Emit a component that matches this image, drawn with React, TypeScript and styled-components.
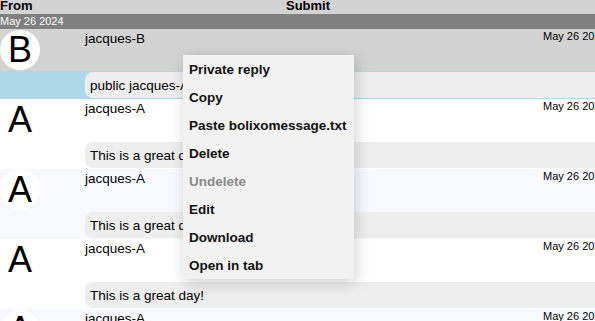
import React from "react";
import styled, { createGlobalStyle } from "styled-components";

const Global = createGlobalStyle`
  html, body { margin: 0; padding: 0; overflow: hidden; background: #fff; }
  body { font-family: "Liberation Sans", Arial, sans-serif; font-size: 13px; color: #000; }
`;

const Page = styled.div`
  position: relative;
  width: 595px;
  height: 321px;
  overflow: hidden;
`;

const Header = styled.div`
  display: grid;
  grid-template-columns: 85px 1fr 64px;
  height: 14px;
  line-height: 12px;
  background: #d3d3d3;
  font-weight: bold;
  font-size: 13px;
`;

const HeaderCell = styled.div<{ $center?: boolean }>`
  text-align: ${(p) => (p.$center ? "center" : "left")};
  white-space: nowrap;
`;

const DateBar = styled.div`
  height: 15px;
  line-height: 14px;
  background: #808080;
  color: #fff;
  font-size: 11px;
`;

const MessageRow = styled.div<{ $bg: string }>`
  display: grid;
  grid-template-columns: 85px 1fr 52px;
  height: 42px;
  background: ${(p) => p.$bg};
`;

const AvatarCell = styled.div`
  padding-top: 1px;
`;

const Avatar = styled.div`
  width: 40px;
  height: 40px;
  border-radius: 50%;
  background: #fff;
  display: flex;
  align-items: center;
  justify-content: center;
  font-size: 36px;
  line-height: 40px;
`;

const Name = styled.div`
  padding-top: 2px;
  font-size: 13.5px;
  line-height: 15px;
`;

const Stamp = styled.div`
  padding-top: 1px;
  font-size: 11px;
  line-height: 13px;
  white-space: nowrap;
`;

const BubbleRow = styled.div<{ $bg: string }>`
  display: flex;
  height: 28px;
  padding: 1px 0 1px 85px;
  box-sizing: border-box;
  background: ${(p) => p.$bg};
`;

const Bubble = styled.div`
  flex: 1;
  background: #eeeeee;
  border-radius: 8px 0 0 8px;
  padding-left: 5px;
  display: flex;
  align-items: center;
  font-size: 13.5px;
  white-space: nowrap;
`;

const Menu = styled.div`
  position: absolute;
  left: 183px;
  top: 55px;
  width: 171px;
  background: #f2f2f2;
  box-shadow: 2px 4px 14px rgba(0, 0, 0, 0.18);
  display: flex;
  flex-direction: column;
`;

const MenuItem = styled.div<{ $disabled?: boolean }>`
  height: 28px;
  line-height: 30px;
  padding-left: 6px;
  font-weight: bold;
  font-size: 13.5px;
  color: ${(p) => (p.$disabled ? "#8a8a8a" : "#111")};
  white-space: nowrap;
`;

type Msg = { letter: string; name: string; text: string; bg: string; bubbleBg: string };

const messages: Msg[] = [
  { letter: "B", name: "jacques-B", text: "public jacques-A to jacques-B", bg: "#d3d3d3", bubbleBg: "#add8e6" },
  { letter: "A", name: "jacques-A", text: "This is a great day!", bg: "#ffffff", bubbleBg: "#ffffff" },
  { letter: "A", name: "jacques-A", text: "This is a great day!", bg: "#f8f8ff", bubbleBg: "#f8f8ff" },
  { letter: "A", name: "jacques-A", text: "This is a great day!", bg: "#ffffff", bubbleBg: "#ffffff" },
  { letter: "A", name: "jacques-A", text: "This is a great day!", bg: "#f8f8ff", bubbleBg: "#f8f8ff" },
];

const menuItems = [
  { label: "Private reply" },
  { label: "Copy" },
  { label: "Paste bolixomessage.txt" },
  { label: "Delete" },
  { label: "Undelete", disabled: true },
  { label: "Edit" },
  { label: "Download" },
  { label: "Open in tab" },
];

export default function App() {
  return (
    <Page>
      <Global />
      <Header>
        <HeaderCell>From</HeaderCell>
        <HeaderCell $center>Submit</HeaderCell>
        <HeaderCell />
      </Header>
      <DateBar>May 26 2024</DateBar>
      {messages.map((m, i) => (
        <React.Fragment key={i}>
          <MessageRow $bg={m.bg}>
            <AvatarCell>
              <Avatar>{m.letter}</Avatar>
            </AvatarCell>
            <Name>{m.name}</Name>
            <Stamp>May 26 2024</Stamp>
          </MessageRow>
          <BubbleRow $bg={m.bubbleBg}>
            <Bubble>{m.text}</Bubble>
          </BubbleRow>
        </React.Fragment>
      ))}
      <Menu>
        {menuItems.map((it) => (
          <MenuItem key={it.label} $disabled={it.disabled}>
            {it.label}
          </MenuItem>
        ))}
      </Menu>
    </Page>
  );
}
